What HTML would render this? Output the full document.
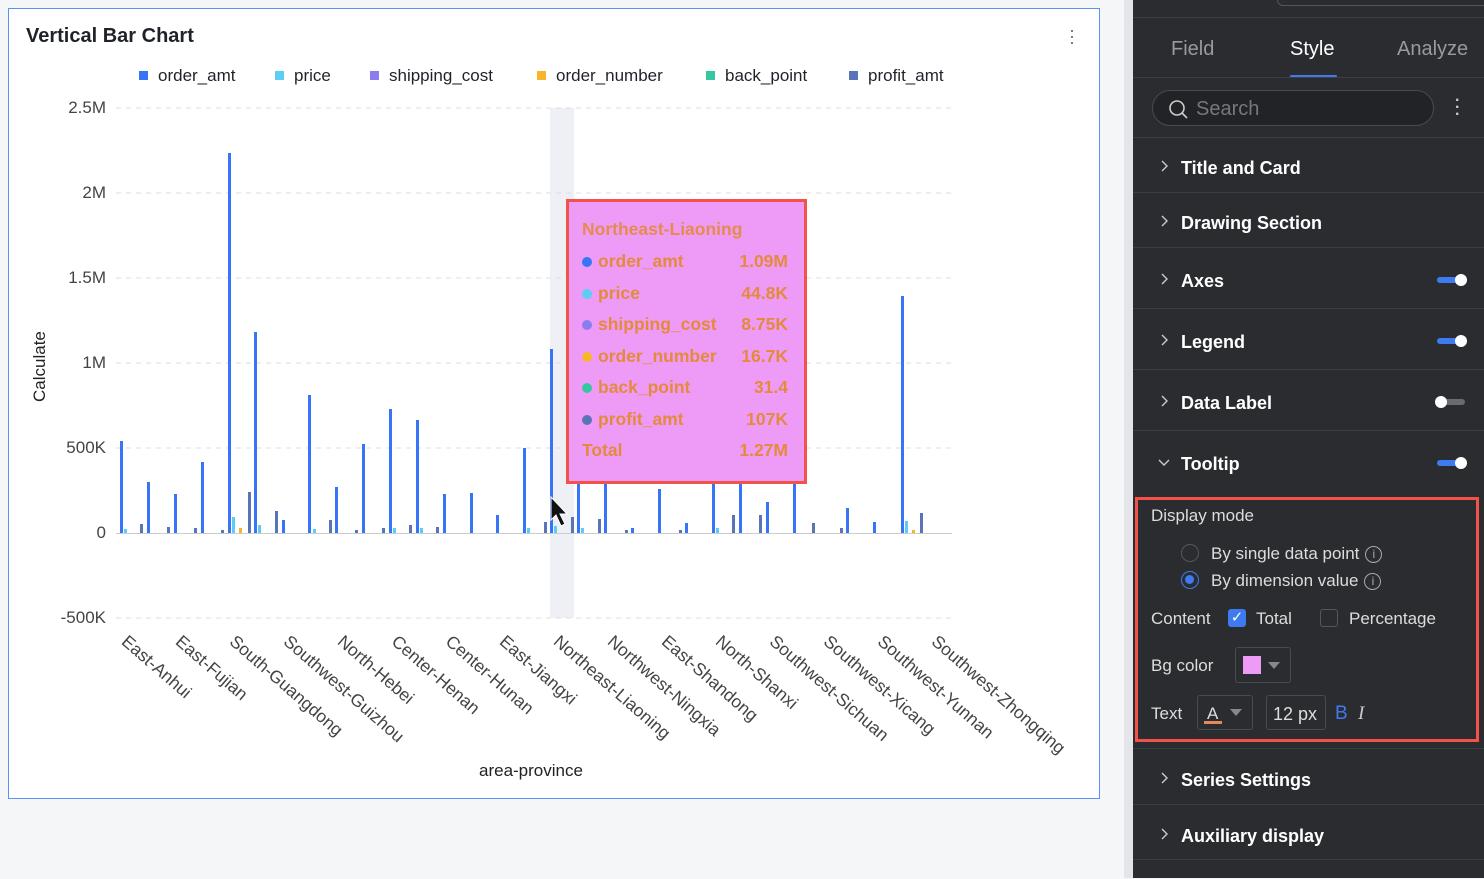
<!DOCTYPE html>
<html><head><meta charset="utf-8"><style>
*{margin:0;padding:0;box-sizing:border-box}
body{width:1484px;height:878px;background:#f5f6f8;font-family:"Liberation Sans",sans-serif;position:relative;overflow:hidden}
.card{position:absolute;left:8px;top:8px;width:1092px;height:791px;background:#fff;border:1.5px solid #5b8ff9}
.abs{position:absolute}
.title{left:17px;top:16px;font-size:20px;font-weight:bold;color:#1f2329}
.leg{top:57px;font-size:17px;color:#1f2329}
.leg i{display:inline-block;width:9px;height:9px;margin-right:10px;vertical-align:1px}
.yl{font-size:17px;color:#444;text-align:right;width:60px;left:46px}
.xl{font-size:17.5px;color:#444;transform:rotate(41deg);transform-origin:0 0;white-space:nowrap}
.panel{position:absolute;left:1133px;top:0;width:351px;height:878px;background:#2b2c30}
.strip{position:absolute;left:1124px;top:0;width:9px;height:878px;background:#e4e5ea}
.row{position:absolute;left:0;width:351px;border-top:1px solid #3d3e43;color:#fff;font-weight:bold;font-size:18px}
.row svg.c{position:absolute;left:26px}
.row span.t{position:absolute;left:48px}
.tg{position:absolute;right:19px;width:28px;height:6px;border-radius:3px;background:#3f7bf0}
.tg b{position:absolute;right:-2px;top:-3px;width:12px;height:12px;border-radius:50%;background:#fff}
.tg.off{background:#6a6b70}.tg.off b{left:-2px;right:auto}
.tt{left:566px;top:199px;width:241px;height:285px;background:#ee9bf7;border:3.5px solid #f2524a;color:#e48a3c;font-weight:bold;font-size:17.5px}
.tt div{position:absolute;left:13px;right:16px}
.tt span.v{float:right}
.tt i{display:inline-block;width:10px;height:10px;border-radius:50%;margin-right:6px}
.w{color:#ddd;font-size:17px}
.info{display:inline-block;width:17px;height:17px;border:1px solid #aaa;border-radius:50%;font-size:12px;text-align:center;line-height:15px;color:#aaa;margin-left:6px;vertical-align:1px}
</style></head><body>
<div class="card">
<div class="abs title">Vertical Bar Chart</div>
<div class="abs" style="right:24px;top:18px;color:#666;font-size:18px;line-height:6px">·<br>·<br>·</div>
<div class="abs leg" style="left:130px"><i style="background:#3875f6"></i>order_amt</div>
<div class="abs leg" style="left:266px"><i style="background:#5ccdf5"></i>price</div>
<div class="abs leg" style="left:361px"><i style="background:#8b7cf0"></i>shipping_cost</div>
<div class="abs leg" style="left:528px"><i style="background:#f7b52c"></i>order_number</div>
<div class="abs leg" style="left:697px"><i style="background:#35c8a0"></i>back_point</div>
<div class="abs leg" style="left:840px"><i style="background:#5a74b8"></i>profit_amt</div>
</div>
<svg class="abs" style="left:0;top:0" width="1100" height="800">
<rect x="550" y="108" width="24" height="510" fill="#eef0f5"/>
<g stroke="#ddd" stroke-dasharray="5,5">
<line x1="116" x2="952" y1="108" y2="108"/><line x1="116" x2="952" y1="193" y2="193"/><line x1="116" x2="952" y1="278" y2="278"/><line x1="116" x2="952" y1="363" y2="363"/><line x1="116" x2="952" y1="448" y2="448"/><line x1="116" x2="952" y1="618" y2="618"/></g>
<line x1="116" x2="952" y1="533.5" y2="533.5" stroke="#ccc"/>
<g fill="#3875f6">
<rect x="120" y="441" width="3" height="92"/><rect x="147" y="482" width="3" height="51"/><rect x="174" y="494" width="3" height="39"/><rect x="201" y="462" width="3" height="71"/><rect x="228" y="153" width="3" height="380"/><rect x="254" y="332" width="3" height="201"/><rect x="282" y="520" width="3" height="13"/><rect x="308" y="395" width="3" height="138"/><rect x="335" y="487" width="3" height="46"/><rect x="362" y="444" width="3" height="89"/><rect x="389" y="409" width="3" height="124"/><rect x="416" y="420" width="3" height="113"/><rect x="443" y="494" width="3" height="39"/><rect x="470" y="493" width="3" height="40"/><rect x="496" y="515" width="3" height="18"/><rect x="523" y="448" width="3" height="85"/><rect x="550" y="349" width="3" height="184"/><rect x="577" y="400" width="3" height="133"/><rect x="604" y="450" width="3" height="83"/><rect x="631" y="528" width="3" height="5"/><rect x="658" y="489" width="3" height="44"/><rect x="685" y="523" width="3" height="10"/><rect x="712" y="430" width="3" height="103"/><rect x="739" y="420" width="3" height="113"/><rect x="766" y="502" width="3" height="31"/><rect x="793" y="460" width="3" height="73"/><rect x="846" y="508" width="3" height="25"/><rect x="873" y="522" width="3" height="11"/><rect x="901" y="296" width="3" height="237"/></g>
<g fill="#5a74b8">
<rect x="140" y="524" width="3" height="9"/><rect x="167" y="527" width="3" height="6"/><rect x="194" y="528" width="3" height="5"/><rect x="221" y="530" width="3" height="3"/><rect x="248" y="492" width="3" height="41"/><rect x="275" y="511" width="3" height="22"/><rect x="329" y="520" width="3" height="13"/><rect x="355" y="530" width="3" height="3"/><rect x="382" y="528" width="3" height="5"/><rect x="409" y="525" width="3" height="8"/><rect x="436" y="527" width="3" height="6"/><rect x="544" y="522" width="3" height="11"/><rect x="571" y="517" width="3" height="16"/><rect x="598" y="519" width="3" height="14"/><rect x="625" y="530" width="3" height="3"/><rect x="679" y="530" width="3" height="3"/><rect x="732" y="515" width="3" height="18"/><rect x="759" y="515" width="3" height="18"/><rect x="812" y="523" width="3" height="10"/><rect x="920" y="513" width="3" height="20"/><rect x="840" y="528" width="3" height="5"/></g>
<g fill="#5ccdf5">
<rect x="124" y="529" width="3" height="4"/><rect x="232" y="517" width="3" height="16"/><rect x="258" y="525" width="3" height="8"/><rect x="313" y="529" width="3" height="4"/><rect x="393" y="528" width="3" height="5"/><rect x="420" y="528" width="3" height="5"/><rect x="527" y="528" width="3" height="5"/><rect x="554" y="526" width="3" height="7"/><rect x="581" y="528" width="3" height="5"/><rect x="716" y="528" width="3" height="5"/><rect x="905" y="521" width="3" height="12"/></g>
<g fill="#f7b52c"><rect x="239" y="528" width="3" height="5"/><rect x="912" y="530" width="3" height="3"/></g>
<path d="M551 497 L551 520 L556 515 L561 526 L565 524 L560 514 L567 514 Z" fill="#111" stroke="#fff" stroke-width="1"/>
</svg>
<div class="abs yl" style="top:98px">2.5M</div>
<div class="abs yl" style="top:183px">2M</div>
<div class="abs yl" style="top:268px">1.5M</div>
<div class="abs yl" style="top:353px">1M</div>
<div class="abs yl" style="top:438px">500K</div>
<div class="abs yl" style="top:523px">0</div>
<div class="abs yl" style="top:608px">-500K</div>
<div class="abs" style="left:30px;top:402px;font-size:17px;color:#222;transform:rotate(-90deg);transform-origin:0 0">Calculate</div>
<div class="abs" style="left:479px;top:761px;font-size:17px;color:#222">area-province</div>
<div class="abs xl" style="left:131px;top:631px">East-Anhui</div>
<div class="abs xl" style="left:185px;top:631px">East-Fujian</div>
<div class="abs xl" style="left:239px;top:631px">South-Guangdong</div>
<div class="abs xl" style="left:293px;top:631px">Southwest-Guizhou</div>
<div class="abs xl" style="left:347px;top:631px">North-Hebei</div>
<div class="abs xl" style="left:401px;top:631px">Center-Henan</div>
<div class="abs xl" style="left:455px;top:631px">Center-Hunan</div>
<div class="abs xl" style="left:509px;top:631px">East-Jiangxi</div>
<div class="abs xl" style="left:563px;top:631px">Northeast-Liaoning</div>
<div class="abs xl" style="left:617px;top:631px">Northwest-Ningxia</div>
<div class="abs xl" style="left:671px;top:631px">East-Shandong</div>
<div class="abs xl" style="left:725px;top:631px">North-Shanxi</div>
<div class="abs xl" style="left:779px;top:631px">Southwest-Sichuan</div>
<div class="abs xl" style="left:833px;top:631px">Southwest-Xicang</div>
<div class="abs xl" style="left:887px;top:631px">Southwest-Yunnan</div>
<div class="abs xl" style="left:941px;top:631px">Southwest-Zhongqing</div>
<div class="abs tt">
<div style="top:17px;opacity:.9">Northeast-Liaoning</div>
<div style="top:49px"><i style="background:#3875f6"></i>order_amt<span class="v">1.09M</span></div>
<div style="top:81px"><i style="background:#5ccdf5"></i>price<span class="v">44.8K</span></div>
<div style="top:112px"><i style="background:#8b7cf0"></i>shipping_cost<span class="v">8.75K</span></div>
<div style="top:144px"><i style="background:#f7b52c"></i>order_number<span class="v">16.7K</span></div>
<div style="top:175px"><i style="background:#35c8a0"></i>back_point<span class="v">31.4</span></div>
<div style="top:207px"><i style="background:#5a74b8"></i>profit_amt<span class="v">107K</span></div>
<div style="top:238px">Total<span class="v">1.27M</span></div>
</div>
<div class="strip"></div>
<div class="panel">
<div class="abs" style="left:144px;top:-10px;width:215px;height:16px;border:1px solid #55565b;border-radius:6px"></div>
<div class="row" style="top:17px;height:60px;font-weight:normal;font-size:20px">
<span class="abs" style="left:38px;top:20px;color:#9a9a9e">Field</span>
<span class="abs" style="left:157px;top:20px;color:#fff">Style</span>
<span class="abs" style="left:264px;top:20px;color:#9a9a9e">Analyze</span>
<span class="abs" style="left:157px;top:57px;width:47px;height:3px;background:#3f7bf0;border-radius:2px"></span></div>
<div class="row" style="top:77px;height:60px">
<div class="abs" style="left:19px;top:12px;width:282px;height:36px;border:1px solid #4a4b50;border-radius:18px;background:#222327"></div>
<svg class="abs" style="left:35px;top:21px" width="20" height="20"><circle cx="9" cy="9" r="7" fill="none" stroke="#ccc" stroke-width="1.6"/><line x1="14" y1="14" x2="19" y2="19" stroke="#ccc" stroke-width="1.6"/></svg>
<span class="abs" style="left:63px;top:20px;color:#77787c;font-weight:normal;font-size:20px">Search</span>
<span class="abs" style="left:322px;top:19px;color:#ccc;line-height:7px;font-size:16px">·<br>·<br>·</span></div>
<div class="row" style="top:137px;height:55px"><svg class="c" style="top:21px" width="10" height="14"><path d="M3 2 L8 7 L3 12" fill="none" stroke="#ccc" stroke-width="1.4"/></svg><span class="t" style="top:20px">Title and Card</span></div>
<div class="row" style="top:192px;height:55px"><svg class="c" style="top:21px" width="10" height="14"><path d="M3 2 L8 7 L3 12" fill="none" stroke="#ccc" stroke-width="1.4"/></svg><span class="t" style="top:20px">Drawing Section</span></div>
<div class="row" style="top:247px;height:61px"><svg class="c" style="top:24px" width="10" height="14"><path d="M3 2 L8 7 L3 12" fill="none" stroke="#ccc" stroke-width="1.4"/></svg><span class="t" style="top:23px">Axes</span><div class="tg" style="top:29px"><b></b></div></div>
<div class="row" style="top:308px;height:61px"><svg class="c" style="top:24px" width="10" height="14"><path d="M3 2 L8 7 L3 12" fill="none" stroke="#ccc" stroke-width="1.4"/></svg><span class="t" style="top:23px">Legend</span><div class="tg" style="top:29px"><b></b></div></div>
<div class="row" style="top:369px;height:61px"><svg class="c" style="top:24px" width="10" height="14"><path d="M3 2 L8 7 L3 12" fill="none" stroke="#ccc" stroke-width="1.4"/></svg><span class="t" style="top:23px">Data Label</span><div class="tg off" style="top:29px"><b></b></div></div>
<div class="row" style="top:430px;height:68px"><svg class="c" style="top:26px;left:24px" width="14" height="10"><path d="M2 3 L7 8 L12 3" fill="none" stroke="#ccc" stroke-width="1.4"/></svg><span class="t" style="top:23px">Tooltip</span><div class="tg" style="top:29px"><b></b></div></div>
<div class="abs" style="left:2px;top:497px;width:344px;height:245px;border:3px solid #f2524a"></div>
<div class="abs w" style="left:18px;top:506px">Display mode</div>
<div class="abs" style="left:48px;top:544px;width:18px;height:18px;border:1px solid #55565b;border-radius:50%"></div>
<div class="abs w" style="left:78px;top:544px">By single data point<span class="info">i</span></div>
<div class="abs" style="left:48px;top:571px;width:18px;height:18px;border:1.5px solid #3f7bf0;border-radius:50%"><div style="margin:3px;width:9px;height:9px;border-radius:50%;background:#3f7bf0"></div></div>
<div class="abs w" style="left:78px;top:571px">By dimension value<span class="info">i</span></div>
<div class="abs w" style="left:18px;top:609px">Content</div>
<div class="abs" style="left:95px;top:609px;width:18px;height:18px;background:#3f7bf0;border-radius:3px;color:#fff;font-size:15px;text-align:center;line-height:18px">✓</div>
<div class="abs w" style="left:123px;top:609px">Total</div>
<div class="abs" style="left:187px;top:609px;width:18px;height:18px;border:1px solid #55565b;border-radius:3px"></div>
<div class="abs w" style="left:216px;top:609px">Percentage</div>
<div class="abs w" style="left:18px;top:656px">Bg color</div>
<div class="abs" style="left:102px;top:647px;width:56px;height:36px;border:1px solid #4a4b50;border-radius:3px"><div class="abs" style="left:7px;top:8px;width:18px;height:18px;background:#ee9bf7"></div><div class="abs" style="left:32px;top:14px;border:6px solid transparent;border-top:7px solid #888"></div></div>
<div class="abs w" style="left:18px;top:704px">Text</div>
<div class="abs" style="left:64px;top:695px;width:56px;height:35px;border:1px solid #4a4b50;border-radius:3px"><span class="abs w" style="left:9px;top:8px">A</span><div class="abs" style="left:6px;top:25px;width:18px;height:3px;background:#e48a5a"></div><div class="abs" style="left:32px;top:13px;border:6px solid transparent;border-top:7px solid #888"></div></div>
<div class="abs" style="left:133px;top:695px;width:60px;height:35px;border:1px solid #4a4b50;border-radius:3px"><span class="abs w" style="left:6px;top:8px;font-size:18px">12 px</span></div>
<div class="abs" style="left:202px;top:703px;color:#3f7bf0;font-size:19px">B</div>
<div class="abs" style="left:225px;top:703px;color:#ccc;font-size:19px;font-style:italic;font-family:'Liberation Serif',serif">I</div>
<div class="row" style="top:748px;height:56px"><svg class="c" style="top:22px" width="10" height="14"><path d="M3 2 L8 7 L3 12" fill="none" stroke="#ccc" stroke-width="1.4"/></svg><span class="t" style="top:21px">Series Settings</span></div>
<div class="row" style="top:804px;height:55px"><svg class="c" style="top:22px" width="10" height="14"><path d="M3 2 L8 7 L3 12" fill="none" stroke="#ccc" stroke-width="1.4"/></svg><span class="t" style="top:21px">Auxiliary display</span></div>
<div class="row" style="top:859px;height:20px"></div>
</div>
</body></html>
